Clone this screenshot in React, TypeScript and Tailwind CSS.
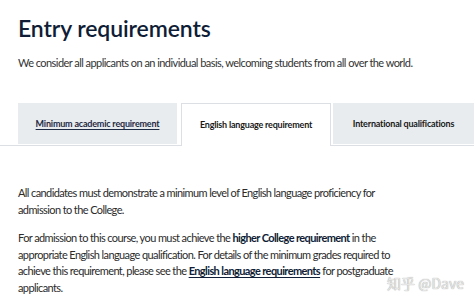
export default function App() {
    return (
        <div className="relative w-[474px] h-[300px] overflow-hidden bg-white font-['Lato','Open_Sans',sans-serif] text-[#333]">
            <div className="px-[18px] pt-[11px]">
                <h1 className="text-[23px] leading-[34px] font-semibold text-[#0f1d36] tracking-[-0.1px]">Entry requirements</h1>
                <p className="mt-[10px] text-[11px] leading-[16px] tracking-[-0.55px] text-[#333] whitespace-nowrap">
                    We consider all applicants on an individual basis, welcoming students from all over the world.
                </p>
            </div>

            <div className="mt-[32px] flex items-end border-b border-[#dcdfe3] pl-[18px]">
                <div className="w-[159px] h-[41px] flex items-center justify-center bg-[#e9ecee] mb-[1px]">
                    <span className="text-[9px] tracking-[-0.2px] font-bold text-[#1f2a44] underline underline-offset-2">Minimum academic requirement</span>
                </div>
                <div className="ml-[4px] w-[150px] h-[43px] -mb-[1px] flex items-center justify-center bg-white border border-b-0 border-[#dcdfe3]">
                    <span className="text-[9px] tracking-[-0.2px] font-bold text-[#1a1a1a]">English language requirement</span>
                </div>
                <div className="ml-[2px] flex-1 h-[41px] flex items-center justify-center bg-[#e9ecee] mb-[1px]">
                    <span className="text-[9px] tracking-[-0.2px] font-bold text-[#1a1a1a]">International qualifications</span>
                </div>
            </div>

            <div className="px-[18px] pt-[39px] text-[11px] leading-[16.5px] tracking-[-0.6px] text-[#2b2b2b] whitespace-nowrap">
                <p>
                    All candidates must demonstrate a minimum level of English language proficiency for
                    <br />
                    admission to the College.
                </p>
                <p className="mt-[12px]">
                    For admission to this course, you must achieve the <b className="font-bold text-[#0f1d36]">higher College requirement</b> in the
                    <br />
                    appropriate English language qualification. For details of the minimum grades required to
                    <br />
                    achieve this requirement, please see the <a className="font-bold text-[#0f1d36] underline underline-offset-2">English language requirements</a> for postgraduate
                    <br />
                    applicants.
                </p>
            </div>

            <div className="absolute right-[10px] top-[273px] text-[14px] leading-[20px] text-[#e6e6e6] font-['Noto_Sans_CJK_SC',sans-serif] [text-shadow:0_0_1px_#8a8a8a] whitespace-nowrap">
                知乎 @Dave
            </div>
        </div>
    );
}
